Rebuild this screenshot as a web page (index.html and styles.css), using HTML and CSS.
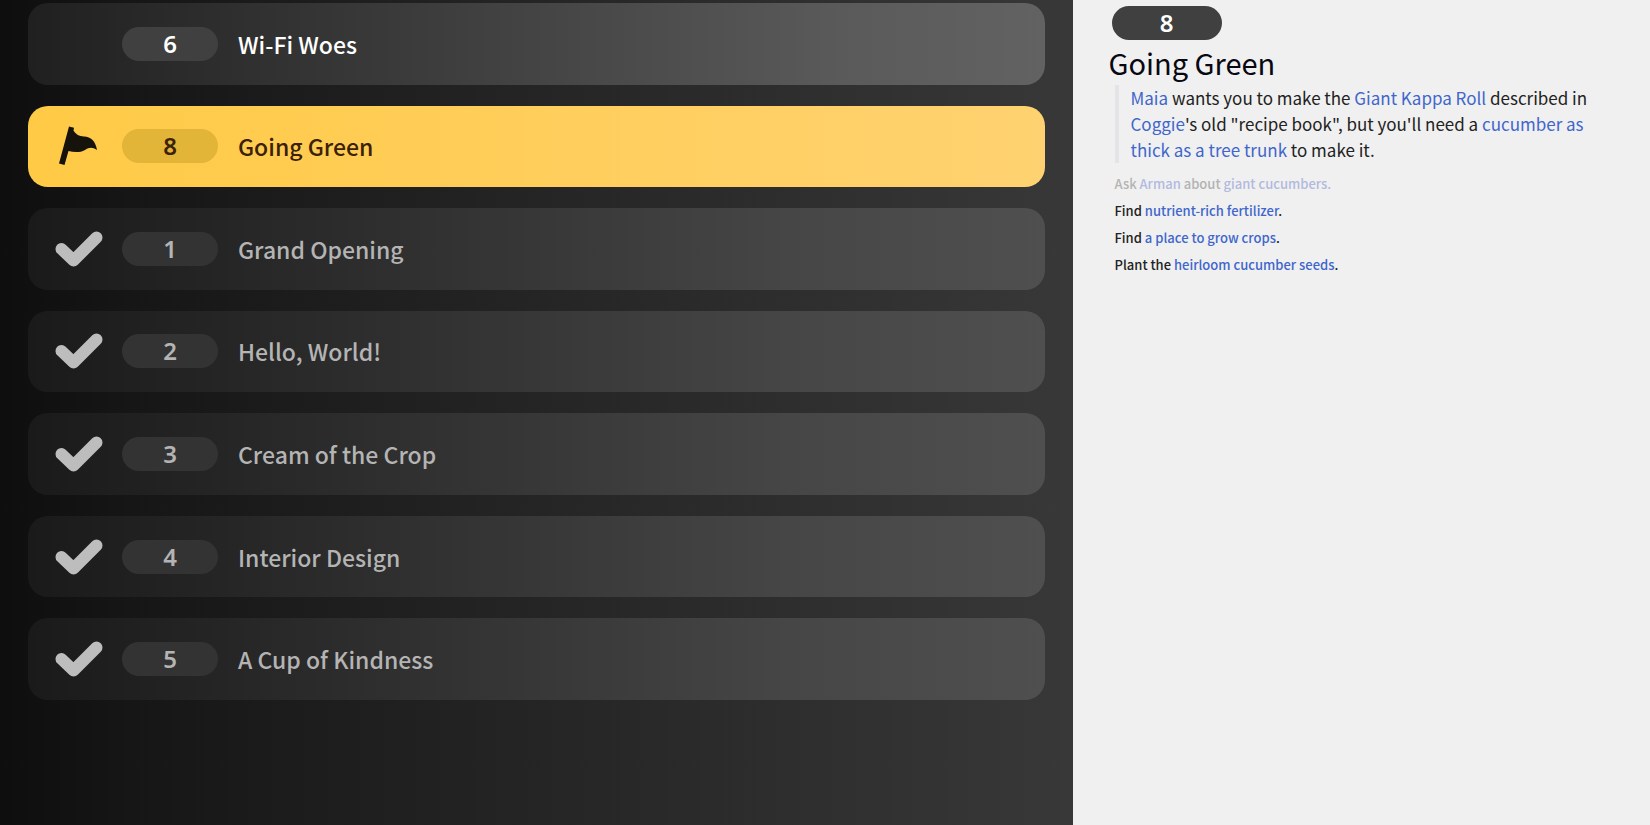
FILE: index.html
```html
<!DOCTYPE html>
<html lang="en">
<head>
    <meta charset="UTF-8">
    <meta name="viewport" content="width=device-width, initial-scale=1.0">
    <title>Quest Log - Going Green</title>
    <link rel="stylesheet" href="styles.css">
</head>
<body>
    <svg class="icon-defs" aria-hidden="true">
        <symbol id="icon-check" viewBox="0 0 48 36">
            <path d="M6.500 18 L18.500 29.500 L41.500 6.500" fill="none" stroke="currentColor" stroke-width="12" stroke-linecap="round" stroke-linejoin="round"/>
        </symbol>
        <symbol id="icon-flag" viewBox="0 0 40 40">
            <path d="M10 0.500 L15 1.800 L14.500 4.500 C17 8.500 20 10.300 25 10.500 C32 10.800 36.500 15 38 24 C33 20.500 30 21.500 26 24 C21 26.800 15 26.500 9.500 25 L5.500 39 L0 37.500 Z" fill="currentColor"/>
        </symbol>
    </svg>

    <div class="quest-log">
        <nav class="quest-panel" aria-label="Quests">
            <button type="button" class="quest">
                <span class="quest-icon"></span>
                <span class="quest-number">6</span>
                <span class="quest-name">Wi-Fi Woes</span>
            </button>
            <button type="button" class="quest active" aria-current="true">
                <span class="quest-icon"><svg class="flag"><use href="#icon-flag"/></svg></span>
                <span class="quest-number">8</span>
                <span class="quest-name">Going Green</span>
            </button>
            <button type="button" class="quest done">
                <span class="quest-icon"><svg class="check"><use href="#icon-check"/></svg></span>
                <span class="quest-number">1</span>
                <span class="quest-name">Grand Opening</span>
            </button>
            <button type="button" class="quest done">
                <span class="quest-icon"><svg class="check"><use href="#icon-check"/></svg></span>
                <span class="quest-number">2</span>
                <span class="quest-name">Hello, World!</span>
            </button>
            <button type="button" class="quest done">
                <span class="quest-icon"><svg class="check"><use href="#icon-check"/></svg></span>
                <span class="quest-number">3</span>
                <span class="quest-name">Cream of the Crop</span>
            </button>
            <button type="button" class="quest done">
                <span class="quest-icon"><svg class="check"><use href="#icon-check"/></svg></span>
                <span class="quest-number">4</span>
                <span class="quest-name">Interior Design</span>
            </button>
            <button type="button" class="quest done">
                <span class="quest-icon"><svg class="check"><use href="#icon-check"/></svg></span>
                <span class="quest-number">5</span>
                <span class="quest-name">A Cup of Kindness</span>
            </button>
        </nav>

        <main class="detail">
            <div class="detail-number">8</div>
            <h1 class="detail-title">Going Green</h1>
            <p class="detail-text"><em>Maia</em> wants you to make the <em>Giant Kappa Roll</em> described in <em>Coggie</em>'s old "recipe book", but you'll need a <em>cucumber as thick as a tree trunk</em> to make it.</p>
            <ul class="steps">
                <li class="step finished">Ask <em>Arman</em> about <em>giant cucumbers.</em></li>
                <li class="step">Find <em>nutrient-rich fertilizer</em>.</li>
                <li class="step">Find <em>a place to grow crops</em>.</li>
                <li class="step">Plant the <em>heirloom cucumber seeds</em>.</li>
            </ul>
        </main>
    </div>
</body>
</html>
```
FILE: styles.css
```css
* {
    margin: 0;
    padding: 0;
    box-sizing: border-box;
}

body {
    font-family: 'Noto Sans CJK JP', 'Noto Sans', sans-serif;
    background: #f0f0f0;
    color: #222;
}

em {
    font-style: normal;
    color: #4066cc;
}

.icon-defs {
    display: none;
}

.quest-log {
    display: grid;
    grid-template-columns: 65% 35%;
    min-height: 100vh;
}

/* quest list */
.quest-panel {
    display: grid;
    grid-auto-rows: 1fr;
    gap: 21px;
    padding: 3px 28px 125px;
    background: linear-gradient(90deg, #0e0e0e 0%, #161616 12%, #383838 100%);
}

.quest {
    display: flex;
    align-items: center;
    padding: 0 22px;
    border: none;
    border-radius: 20px;
    background: linear-gradient(90deg, #202020 0%, #5a5a5a 80%, #626262 100%);
    color: #fff;
    font-family: inherit;
    font-size: 23px;
    font-weight: 500;
    text-align: left;
    cursor: pointer;
}

.quest.done {
    background: linear-gradient(90deg, #1a1a1a 0%, #464646 75%, #4f4f4f 100%);
    color: #b4b4b4;
}

.quest.active {
    background: linear-gradient(90deg, #ffca45 0%, #ffd271 100%);
    color: #3a2108;
}

.quest-icon {
    display: flex;
    align-items: center;
    justify-content: center;
    width: 58px;
    color: #bdbdbd;
}

.check {
    width: 48px;
    height: 36px;
}

.flag {
    width: 40px;
    height: 40px;
}

.active .quest-icon {
    color: #15130c;
}

.quest-number,
.detail-number {
    border-radius: 17px;
    background: #404040;
    font-family: 'Noto Sans', sans-serif;
    font-size: 24px;
    font-weight: 600;
    line-height: 34px;
    text-align: center;
}

.quest-number {
    width: 96px;
    margin: 0 20px 0 14px;
}

.done .quest-number {
    background: #333;
}

.active .quest-number {
    background: #e2b437;
}

/* selected quest */
.detail {
    padding: 6px 36px;
}

.detail-number {
    width: 110px;
    margin-left: 3px;
    color: #fff;
}

.detail-title {
    color: #080812;
    font-size: 29px;
    font-weight: 400;
    line-height: 45px;
}

.detail-text {
    margin-left: 6px;
    padding-left: 12px;
    border-left: 4px solid #e4e4e6;
    font-size: 17px;
    line-height: 26px;
}

.steps {
    margin: 7px 0 0 6px;
    list-style: none;
}

.step {
    font-size: 13px;
    font-weight: 500;
    line-height: 27px;
}

.step.finished {
    color: #b3b3b3;
}

.step.finished em {
    color: #b3b9df;
}
```
